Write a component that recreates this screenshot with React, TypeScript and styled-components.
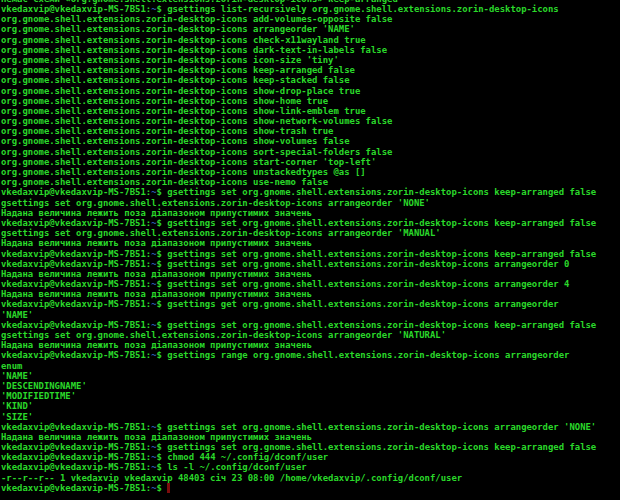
import React from "react";
import styled, { createGlobalStyle } from "styled-components";

const Global = createGlobalStyle`
  html, body { margin: 0; padding: 0; background: #000; }
  #root { width: 620px; height: 500px; }
`;

const Screen = styled.div`
  width: 620px;
  height: 500px;
  background: #000;
  display: flex;
  flex-direction: column;
  justify-content: flex-end;
  overflow: hidden;
  padding: 0 0 7px 1px;
  box-sizing: border-box;
  font-family: "DejaVu Sans Mono", "Liberation Mono", monospace;
  font-size: 8.92px;
  font-weight: bold;
  line-height: 10.19px;
  color: #2ad82a;
`;

const Line = styled.div`
  white-space: pre;
  height: 10.19px;
  flex: none;
`;

const Tilde = styled.span`
  color: #2f5fb8;
`;

const Cursor = styled.span`
  display: inline-block;
  width: 2.5px;
  height: 10px;
  background: #7c0c0c;
  vertical-align: top;
`;

type Row = { p?: boolean; t: string; cursor?: boolean };

const S = "org.gnome.shell.extensions.zorin-desktop-icons";
const ERR = "Надана величина лежить поза діапазоном припустимих значень";

const rows: Row[] = [
  { t: `Немає схеми «${S}» keep-arranged` },
  { p: true, t: `gsettings list-recursively ${S}` },
  { t: `${S} add-volumes-opposite false` },
  { t: `${S} arrangeorder 'NAME'` },
  { t: `${S} check-x11wayland true` },
  { t: `${S} dark-text-in-labels false` },
  { t: `${S} icon-size 'tiny'` },
  { t: `${S} keep-arranged false` },
  { t: `${S} keep-stacked false` },
  { t: `${S} show-drop-place true` },
  { t: `${S} show-home true` },
  { t: `${S} show-link-emblem true` },
  { t: `${S} show-network-volumes false` },
  { t: `${S} show-trash true` },
  { t: `${S} show-volumes false` },
  { t: `${S} sort-special-folders false` },
  { t: `${S} start-corner 'top-left'` },
  { t: `${S} unstackedtypes @as []` },
  { t: `${S} use-nemo false` },
  { p: true, t: `gsettings set ${S} keep-arranged false` },
  { t: `gsettings set ${S} arrangeorder 'NONE'` },
  { t: ERR },
  { p: true, t: `gsettings set ${S} keep-arranged false` },
  { t: `gsettings set ${S} arrangeorder 'MANUAL'` },
  { t: ERR },
  { p: true, t: `gsettings set ${S} keep-arranged false` },
  { p: true, t: `gsettings set ${S} arrangeorder 0` },
  { t: ERR },
  { p: true, t: `gsettings set ${S} arrangeorder 4` },
  { t: ERR },
  { p: true, t: `gsettings get ${S} arrangeorder` },
  { t: `'NAME'` },
  { p: true, t: `gsettings set ${S} keep-arranged false` },
  { t: `gsettings set ${S} arrangeorder 'NATURAL'` },
  { t: ERR },
  { p: true, t: `gsettings range ${S} arrangeorder` },
  { t: `enum` },
  { t: `'NAME'` },
  { t: `'DESCENDINGNAME'` },
  { t: `'MODIFIEDTIME'` },
  { t: `'KIND'` },
  { t: `'SIZE'` },
  { p: true, t: `gsettings set ${S} arrangeorder 'NONE'` },
  { t: ERR },
  { p: true, t: `gsettings set ${S} keep-arranged false` },
  { p: true, t: `chmod 444 ~/.config/dconf/user` },
  { p: true, t: `ls -l ~/.config/dconf/user` },
  { t: `-r--r--r-- 1 vkedaxvip vkedaxvip 48403 січ 23 08:00 /home/vkedaxvip/.config/dconf/user` },
  { p: true, t: ``, cursor: true },
];

const Prompt: React.FC = () => (
  <>
    {"vkedaxvip@vkedaxvip-MS-7B51:"}
    <Tilde>~</Tilde>
    {"$ "}
  </>
);

export default function App() {
  return (
    <>
      <Global />
      <Screen>
        {rows.map((r, i) => (
          <Line key={i}>
            {r.p && <Prompt />}
            {r.t}
            {r.cursor && <Cursor />}
          </Line>
        ))}
      </Screen>
    </>
  );
}
